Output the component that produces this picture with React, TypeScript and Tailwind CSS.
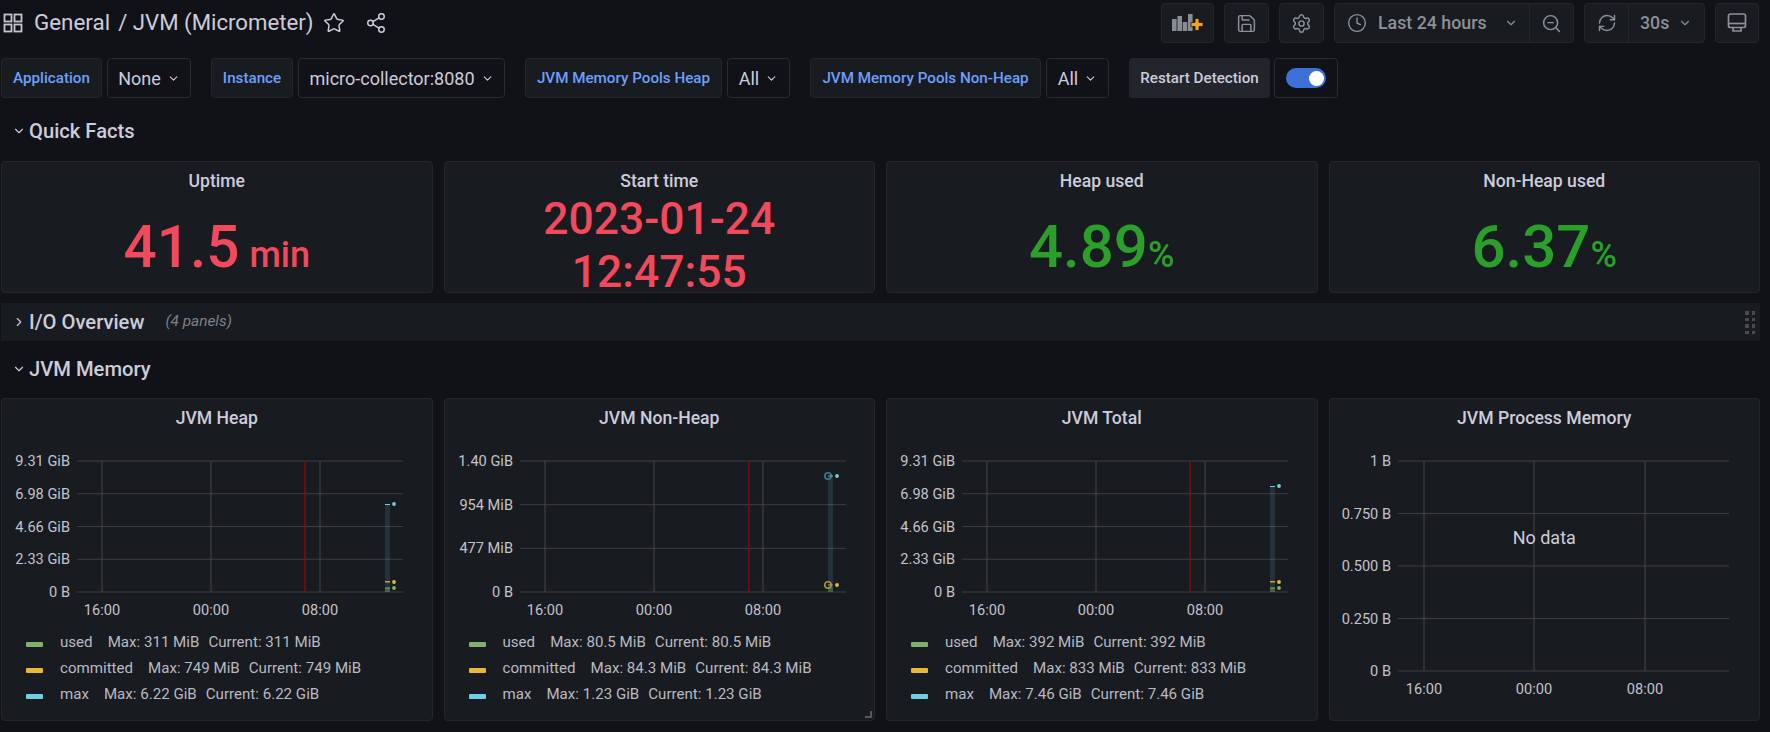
import { ChevronDown, ChevronRight, Clock, RefreshCw, Save, Settings, Share2, Star, ZoomOut } from "lucide-react";

const font = "font-['Roboto','Liberation_Sans',sans-serif]";

type Chart = {
  title: string;
  yLabels: string[];
  xTicks: { x: number; label: string }[];
  annotation?: number;
  spike?: "heap" | "nonheap" | "total";
  legend?: { name: string; max: string; current: string; color: string }[];
};

const ticks = [
  { x: 100, label: "16:00" },
  { x: 209, label: "00:00" },
  { x: 318, label: "08:00" },
];

const charts: Chart[] = [
  {
    title: "JVM Heap",
    yLabels: ["9.31 GiB", "6.98 GiB", "4.66 GiB", "2.33 GiB", "0 B"],
    xTicks: ticks,
    annotation: 303,
    spike: "heap",
    legend: [
      { name: "used", max: "311 MiB", current: "311 MiB", color: "#7eb26d" },
      { name: "committed", max: "749 MiB", current: "749 MiB", color: "#eab839" },
      { name: "max", max: "6.22 GiB", current: "6.22 GiB", color: "#6ed0e0" },
    ],
  },
  {
    title: "JVM Non-Heap",
    yLabels: ["1.40 GiB", "954 MiB", "477 MiB", "0 B"],
    xTicks: ticks,
    annotation: 304,
    spike: "nonheap",
    legend: [
      { name: "used", max: "80.5 MiB", current: "80.5 MiB", color: "#7eb26d" },
      { name: "committed", max: "84.3 MiB", current: "84.3 MiB", color: "#eab839" },
      { name: "max", max: "1.23 GiB", current: "1.23 GiB", color: "#6ed0e0" },
    ],
  },
  {
    title: "JVM Total",
    yLabels: ["9.31 GiB", "6.98 GiB", "4.66 GiB", "2.33 GiB", "0 B"],
    xTicks: ticks,
    annotation: 303,
    spike: "total",
    legend: [
      { name: "used", max: "392 MiB", current: "392 MiB", color: "#7eb26d" },
      { name: "committed", max: "833 MiB", current: "833 MiB", color: "#eab839" },
      { name: "max", max: "7.46 GiB", current: "7.46 GiB", color: "#6ed0e0" },
    ],
  },
  {
    title: "JVM Process Memory",
    yLabels: ["1 B", "0.750 B", "0.500 B", "0.250 B", "0 B"],
    xTicks: [
      { x: 94, label: "16:00" },
      { x: 204, label: "00:00" },
      { x: 315, label: "08:00" },
    ],
  },
];

function ToolButton({ children, className = "" }: { children: React.ReactNode; className?: string }) {
  return (
    <div className={`h-[40px] flex items-center justify-center rounded-sm border border-[#24262b] bg-[#181b1f] text-[#8e9099] ${className}`}>
      {children}
    </div>
  );
}

function AddPanelIcon() {
  return (
    <svg width="31" height="18" viewBox="0 0 31 18">
      <rect x="0" y="5" width="4.6" height="12" fill="#8a8c94" />
      <rect x="5.4" y="2" width="4.6" height="15" fill="#8a8c94" />
      <rect x="10.7" y="8" width="4.6" height="9" fill="#8a8c94" />
      <rect x="16" y="0" width="4.6" height="17" fill="#8a8c94" />
      <path d="M23 4.5h4v4h4v4h-4v4h-4v-4h-4v-4h4z" fill="#f5a01f" stroke="#181b1f" strokeWidth="0.8" />
    </svg>
  );
}

function TvIcon() {
  return (
    <svg width="22" height="22" viewBox="0 0 22 22" fill="none" stroke="#8e9099" strokeWidth="1.7">
      <rect x="2.5" y="2" width="17" height="13.5" rx="2" />
      <path d="M2.5 11.5h17" />
      <path d="M7 15.5v3.5h8v-3.5" />
    </svg>
  );
}

function Variable({ label, value, w, vw }: { label: string; value: string; w: string; vw: string }) {
  return (
    <div className="flex gap-[5px]">
      <div className={`${w} h-[40px] flex items-center justify-center rounded-sm border border-[#24262b] bg-[#181b1f] text-[15.2px] font-medium text-[#6e9fff]`}>
        {label}
      </div>
      <div className={`${vw} h-[40px] flex items-center justify-center gap-[6px] rounded-sm border border-[#2a2c31] bg-[#111217] text-[18px] text-[#ccccdc]`}>
        {value}
        <ChevronDown size={13} className="text-[#ccccdc]" />
      </div>
    </div>
  );
}

function RowTitle({ title, className = "" }: { title: string; className?: string }) {
  return (
    <div className={`h-[38px] flex items-center text-[20.2px] font-medium text-[#ccccdc] ${className}`}>
      <ChevronDown size={14} className="ml-[12px] mr-[3px]" />
      {title}
    </div>
  );
}

function StatPanel({ title, children }: { title: string; children: React.ReactNode }) {
  return (
    <div className="h-[132px] rounded-sm border border-[#24262b] bg-[#181b1f] flex flex-col items-center">
      <div className="mt-[8px] h-[22px] leading-[22px] text-[17.6px] font-medium text-[#ccccdc]">{title}</div>
      {children}
    </div>
  );
}

function ChartPanel({ chart }: { chart: Chart }) {
  const top = 62;
  const bottom = chart.legend ? 193 : 272;
  const right = chart.legend ? 401 : 399;
  const left = chart.legend ? 75 : 68;
  const n = chart.yLabels.length;
  const gridY = chart.yLabels.map((_, i) => top + ((bottom - top) * i) / (n - 1));
  const spikeX = 383;
  const spikeTop = chart.spike === "heap" ? 105 : chart.spike === "nonheap" ? 77 : 87;
  return (
    <div className="relative h-[323px] rounded-sm border border-[#24262b] bg-[#181b1f]">
      <div className="mt-[8px] h-[22px] leading-[22px] text-center text-[17.6px] font-medium text-[#ccccdc]">{chart.title}</div>
      <svg className="absolute left-0 top-0" width="428" height={chart.legend ? 225 : 320}>
        {gridY.map((y, i) => (
          <g key={i}>
            <line x1={left} x2={right} y1={y} y2={y} stroke="#3c3e42" strokeWidth="1" />
            <text x={left - 7} y={y + 5} textAnchor="end" fontSize="14.6" fill="#c2c3cc" fontFamily="Roboto">
              {chart.yLabels[i]}
            </text>
          </g>
        ))}
        {chart.xTicks.map((t) => (
          <g key={t.label}>
            <line x1={t.x} x2={t.x} y1={top} y2={bottom} stroke="#45474b" strokeWidth="1" />
            <text x={t.x} y={bottom + 23} textAnchor="middle" fontSize="14.6" fill="#c2c3cc" fontFamily="Roboto">
              {t.label}
            </text>
          </g>
        ))}
        {chart.annotation && <line x1={chart.annotation} x2={chart.annotation} y1={top} y2={bottom} stroke="#7a0f0f" strokeWidth="1.5" />}
        {chart.spike && (
          <g>
            <rect x={spikeX} y={spikeTop} width="5" height={bottom - spikeTop} fill="#6ed0e0" fillOpacity="0.13" />
            {chart.spike === "nonheap" ? (
              <>
                <circle cx={spikeX} cy={spikeTop} r="3.2" fill="none" stroke="#3d7d8c" strokeWidth="1.6" />
                <line x1={spikeX} x2={spikeX + 5} y1={spikeTop} y2={spikeTop} stroke="#5fb3c2" strokeWidth="1" />
                <circle cx={spikeX + 9} cy={spikeTop} r="1.9" fill="#6ed0e0" />
                <circle cx={spikeX} cy={186} r="3.2" fill="none" stroke="#a8943a" strokeWidth="1.6" />
                <line x1={spikeX} x2={spikeX + 5} y1={186} y2={186} stroke="#c9a33e" strokeWidth="1" />
                <circle cx={spikeX + 9} cy={186} r="1.9" fill="#eab839" />
                <rect x={spikeX} y={188} width="5" height="5" fill="#7eb26d" fillOpacity="0.3" />
              </>
            ) : (
              <>
                <rect x={spikeX} y={spikeTop} width="5" height="1" fill="#6ed0e0" />
                <circle cx={spikeX + 9} cy={spikeTop} r="1.9" fill="#6ed0e0" />
                <rect x={spikeX} y="182" width="5" height="1.5" fill="#c9a33e" />
                <circle cx={spikeX + 9} cy="183" r="1.9" fill="#eab839" />
                <rect x={spikeX} y="189" width="5" height="4" fill="#7eb26d" fillOpacity="0.35" />
                <rect x={spikeX} y="188.5" width="5" height="1" fill="#7eb26d" />
                <circle cx={spikeX + 9} cy="189" r="1.9" fill="#7eb26d" />
              </>
            )}
          </g>
        )}
      </svg>
      {chart.title === "JVM Process Memory" && (
        <div className="absolute left-0 right-0 top-[128px] text-center text-[18px] leading-[21px] text-[#ccccdc]">No data</div>
      )}
      {chart.legend && (
        <div className="absolute left-[24px] top-[230px] flex flex-col text-[15.1px] text-[#b9bac3]">
          {chart.legend.map((l) => (
            <div key={l.name} className="h-[26px] flex items-center whitespace-nowrap">
              <span className="inline-block w-[17px] h-[5px] mt-[5px] mr-[17px] rounded-[1px]" style={{ background: l.color }} />
              <span className="mr-[15px]">{l.name}</span>
              <span className="mr-[9px]">Max: {l.max}</span>
              <span>Current: {l.current}</span>
            </div>
          ))}
        </div>
      )}
      {chart.title === "JVM Non-Heap" && (
        <svg className="absolute right-[1px] bottom-[1px]" width="10" height="10">
          <path d="M8 2v6H2" fill="none" stroke="#6b6d73" strokeWidth="1.5" />
        </svg>
      )}
    </div>
  );
}

export default function App() {
  return (
    <div className={`${font} w-[1770px] h-[732px] overflow-hidden bg-[#111217] text-[#ccccdc]`}>
      <header className="h-[43px] pt-[3px] flex items-start">
        <div className="h-[40px] flex items-center pl-[3px]">
          <svg width="20" height="20" viewBox="0 0 20 20" fill="none" stroke="#c4c5cd" strokeWidth="1.8">
            <rect x="1.5" y="1.5" width="7" height="7" />
            <rect x="11.5" y="1.5" width="7" height="7" />
            <rect x="1.5" y="11.5" width="7" height="7" />
            <rect x="11.5" y="11.5" width="7" height="7" />
          </svg>
          <span className="ml-[11px] text-[22.4px] text-[#ccccdc]">General</span>
          <span className="ml-[8px] text-[22.2px] text-[#ccccdc]">/ JVM (Micrometer)</span>
          <Star size={22} className="ml-[10px]" strokeWidth={1.6} />
          <Share2 size={22} className="ml-[20px]" strokeWidth={1.6} />
        </div>
        <div className="ml-auto flex gap-[10px] pr-[11px]">
          <ToolButton className="w-[53px]"><AddPanelIcon /></ToolButton>
          <ToolButton className="w-[45px]"><Save size={21} strokeWidth={1.7} /></ToolButton>
          <ToolButton className="w-[45px]"><Settings size={21} strokeWidth={1.7} /></ToolButton>
          <ToolButton className="w-[240px]">
            <div className="w-[195px] h-full flex items-center pl-[12px] border-r border-[#24262b]">
              <Clock size={20} strokeWidth={1.7} />
              <span className="ml-[11px] text-[17.8px] font-medium">Last 24 hours</span>
              <ChevronDown size={14} className="ml-[17px]" />
            </div>
            <div className="flex-1 flex items-center justify-center"><ZoomOut size={21} strokeWidth={1.7} /></div>
          </ToolButton>
          <ToolButton className="w-[121px]">
            <div className="w-[44px] h-full flex items-center justify-center border-r border-[#24262b]"><RefreshCw size={20} strokeWidth={1.7} /></div>
            <div className="flex-1 flex items-center pl-[11px] gap-[9px]">
              <span className="text-[17.8px] font-medium">30s</span>
              <ChevronDown size={14} />
            </div>
          </ToolButton>
          <ToolButton className="w-[44px]"><TvIcon /></ToolButton>
        </div>
      </header>

      <div className="mt-[15px] pl-[1px] flex gap-[20px]">
        <Variable label="Application" value="None" w="w-[101px]" vw="w-[84px]" />
        <Variable label="Instance" value="micro-collector:8080" w="w-[82px]" vw="w-[207px]" />
        <Variable label="JVM Memory Pools Heap" value="All" w="w-[197px]" vw="w-[63px]" />
        <Variable label="JVM Memory Pools Non-Heap" value="All" w="w-[231px]" vw="w-[63px]" />
        <div className="flex gap-[4px]">
          <div className="w-[141px] h-[40px] flex items-center justify-center rounded-sm bg-[#22252b] text-[15.2px] font-medium text-[#ccccdc]">
            Restart Detection
          </div>
          <div className="w-[64px] h-[40px] flex items-center justify-center rounded-sm border border-[#2a2c31]">
            <div className="w-[40px] h-[20px] rounded-full bg-[#3d71d9] flex items-center justify-end pr-[2px]">
              <div className="w-[15px] h-[15px] rounded-full bg-white" />
            </div>
          </div>
        </div>
      </div>

      <RowTitle title="Quick Facts" className="mt-[14px]" />
      <div className="mt-[11px] pl-[1px] w-[1760px] grid grid-cols-4 gap-[11px]">
        <StatPanel title="Uptime">
          <div className="mt-[20px] flex items-baseline text-[#f2495c] font-medium">
            <span className="text-[58.5px] leading-[70px]">41.5</span>
            <span className="ml-[10px] text-[36px] leading-[70px]">min</span>
          </div>
        </StatPanel>
        <StatPanel title="Start time">
          <div className="mt-[1px] text-center text-[#f2495c] font-medium text-[44.4px] leading-[53px]">
            <div>2023-01-24</div>
            <div>12:47:55</div>
          </div>
        </StatPanel>
        <StatPanel title="Heap used">
          <div className="mt-[20px] flex items-baseline text-[#2aa02b] font-medium">
            <span className="text-[60px] leading-[70px]">4.89</span>
            <span className="text-[36px] leading-[70px]">%</span>
          </div>
        </StatPanel>
        <StatPanel title="Non-Heap used">
          <div className="mt-[20px] flex items-baseline text-[#2aa02b] font-medium">
            <span className="text-[60px] leading-[70px]">6.37</span>
            <span className="text-[36px] leading-[70px]">%</span>
          </div>
        </StatPanel>
      </div>

      <div className="relative mt-[10px] ml-[1px] w-[1759px] h-[38px] bg-[#181b1f] flex items-center text-[20.2px] font-medium text-[#ccccdc]">
        <ChevronRight size={14} className="ml-[11px] mr-[3px]" />
        I/O Overview
        <span className="ml-[21px] text-[15.4px] font-normal italic text-[#7f8188]">(4 panels)</span>
        <div className="absolute right-[5px] top-[8px] grid grid-cols-2 gap-x-[3px] gap-y-[3px]">
          {Array.from({ length: 8 }).map((_, i) => (
            <span key={i} className="w-[3.5px] h-[3.5px] bg-[#4a4b4e]" />
          ))}
        </div>
      </div>

      <RowTitle title="JVM Memory" className="mt-[9px]" />
      <div className="mt-[10px] pl-[1px] w-[1760px] grid grid-cols-4 gap-[11px]">
        {charts.map((c) => (
          <ChartPanel key={c.title} chart={c} />
        ))}
      </div>
    </div>
  );
}
